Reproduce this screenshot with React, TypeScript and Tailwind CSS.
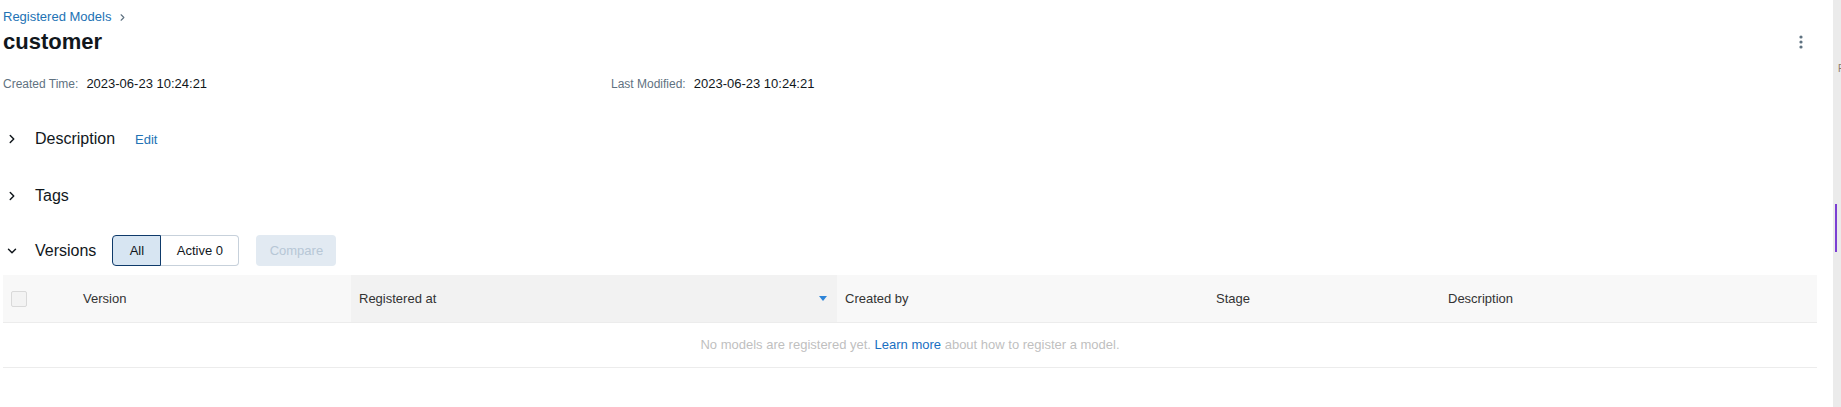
import { ChevronDown, ChevronRight } from "lucide-react";

const columns = [
  { key: "version", label: "Version" },
  { key: "registered", label: "Registered at", sorted: true },
  { key: "createdBy", label: "Created by" },
  { key: "stage", label: "Stage" },
  { key: "description", label: "Description" },
];

function KebabIcon() {
  return (
    <svg width="4" height="14" viewBox="0 0 4 14" fill="#5f7281">
      <circle cx="2" cy="2" r="1.6" />
      <circle cx="2" cy="7" r="1.6" />
      <circle cx="2" cy="12" r="1.6" />
    </svg>
  );
}

function SectionRow({
  title,
  open = false,
  children,
}: {
  title: string;
  open?: boolean;
  children?: React.ReactNode;
}) {
  return (
    <div className="flex h-[31px] items-center">
      <span className="ml-[2px] flex w-[14px] items-center text-[#11171c]">
        {open ? (
          <ChevronDown size={14} strokeWidth={2.5} />
        ) : (
          <ChevronRight size={14} strokeWidth={2.5} />
        )}
      </span>
      <h3 className="ml-4 text-[16px] leading-5 text-[#11171c]">{title}</h3>
      {children}
    </div>
  );
}

export default function App() {
  return (
    <div className="flex min-h-[407px] w-full bg-white font-['Liberation_Sans',Arial,sans-serif]">
      <main className="min-w-0 flex-1 pl-[3px] pr-4 pt-2">
        <nav className="flex h-[18px] items-center text-[13px] leading-[18px]">
          <a className="text-[#2272b4]">Registered Models</a>
          <ChevronRight size={11} strokeWidth={2.5} className="ml-[6px] text-[#5f7281]" />
        </nav>

        <div className="mt-[2px] flex h-7 items-center justify-between">
          <h1 className="text-[22px] font-bold leading-7 text-[#11171c]">customer</h1>
          <button className="flex h-8 w-8 items-center justify-center">
            <KebabIcon />
          </button>
        </div>

        <div className="mt-[18px] flex h-5 items-center">
          <div className="flex w-[608px] items-center">
            <span className="text-[12px] text-[#5f7281]">Created Time:</span>
            <span className="ml-2 text-[13px] text-[#11171c]">2023-06-23 10:24:21</span>
          </div>
          <div className="flex items-center">
            <span className="text-[12px] text-[#5f7281]">Last Modified:</span>
            <span className="ml-2 text-[13px] text-[#11171c]">2023-06-23 10:24:21</span>
          </div>
        </div>

        <div className="mt-[29px]">
          <SectionRow title="Description">
            <a className="ml-5 mt-[3px] text-[13px] text-[#2272b4]">Edit</a>
          </SectionRow>
        </div>

        <div className="mt-[26px]">
          <SectionRow title="Tags" />
        </div>

        <div className="mt-[24px]">
          <SectionRow title="Versions" open>
            <div className="ml-4 flex h-[31px]">
              <button className="w-[49px] rounded-l-[4px] border border-[#0e3a6a] bg-[#d7e5f2] text-[13px] text-[#11171c]">
                All
              </button>
              <button className="w-[78px] rounded-r-[4px] border border-l-0 border-[#c7d1db] bg-white text-[13px] text-[#11171c]">
                Active 0
              </button>
            </div>
            <button className="ml-[17px] h-[31px] w-[80px] rounded-[4px] bg-[#e2eaf2] text-[13px] text-[#b7c7d6]">
              Compare
            </button>
          </SectionRow>
        </div>

        <div className="mt-[9px]">
          <div className="grid h-[48px] grid-cols-[72px_276px_486px_371px_232px_1fr] border-b border-[#ececec] bg-[#f8f8f8] text-[13px] text-[#333]">
            <div className="flex items-center pl-2">
              <span className="h-4 w-4 rounded-[2px] border border-[#d9d9d9] bg-[#f3f3f3]" />
            </div>
            {columns.map((c) => (
              <div
                key={c.key}
                className={
                  c.sorted
                    ? "flex items-center justify-between bg-[#f2f2f2] pl-2 pr-[10px]"
                    : "flex items-center pl-2"
                }
              >
                <span>{c.label}</span>
                {c.sorted ? (
                  <svg width="8" height="5" viewBox="0 0 8 5">
                    <path d="M0 0h8L4 5z" fill="#2d84d8" />
                  </svg>
                ) : null}
              </div>
            ))}
          </div>
          <div className="flex h-[45px] items-center justify-center border-b border-[#ececec] text-[13px] text-[#bfbfbf]">
            <span>
              No models are registered yet. <a className="text-[#1a6fc2]">Learn more</a> about how to
              register a model.
            </span>
          </div>
        </div>
      </main>

      <aside className="w-2 shrink-0 overflow-hidden bg-[#ebebeb] pt-[63px]">
        <div className="whitespace-nowrap pl-[5px] text-[10px] leading-3 text-[#8a7a6a]">P</div>
        <div className="ml-[2px] mt-[129px] h-12 w-[2px] bg-[#7b3fd3]" />
      </aside>
    </div>
  );
}
